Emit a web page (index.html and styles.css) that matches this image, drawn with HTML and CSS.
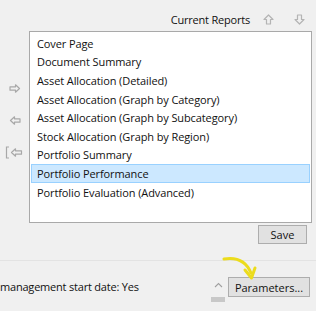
FILE: index.html
```html
<!DOCTYPE html>
<html>
<head>
<meta charset="utf-8">
<link rel="stylesheet" href="styles.css">
</head>
<body>
<div class="page">
  <div class="top">
    <span class="title">Current Reports</span>
    <span class="arr up"><svg width="11" height="11" viewBox="0 0 11 11"><path d="M5.5 1 L10 5.5 L7.5 5.5 L7.5 10 L3.5 10 L3.5 5.5 L1 5.5 Z" fill="none" stroke="#b4b4b4" stroke-width="1.2" stroke-linejoin="round"/></svg></span>
    <span class="arr down"><svg width="11" height="11" viewBox="0 0 11 11"><path d="M5.5 10 L10 5.5 L7.5 5.5 L7.5 1 L3.5 1 L3.5 5.5 L1 5.5 Z" fill="none" stroke="#b4b4b4" stroke-width="1.2" stroke-linejoin="round"/></svg></span>
  </div>
  <div class="main">
    <div class="gutter">
      <span class="gicon"><svg width="12" height="9" viewBox="0 0 12 9"><path d="M1 2.8 L6.5 2.8 L6.5 0.8 L10.5 4.5 L6.5 8.2 L6.5 6.2 L1 6.2 Z" fill="none" stroke="#a8a8a8" stroke-width="1.2" stroke-linejoin="round"/></svg></span>
      <span class="gicon"><svg width="12" height="9" viewBox="0 0 12 9"><path d="M11 2.8 L5.5 2.8 L5.5 0.8 L1.5 4.5 L5.5 8.2 L5.5 6.2 L11 6.2 Z" fill="none" stroke="#a8a8a8" stroke-width="1.2" stroke-linejoin="round"/></svg></span>
      <span class="gicon wide"><svg width="18" height="13" viewBox="0 0 18 13"><path d="M4 1 L1.5 1 L1.5 12 L4 12" fill="none" stroke="#a8a8a8" stroke-width="1.2"/><path d="M16.5 4.8 L10.5 4.8 L10.5 2.8 L6.5 6.5 L10.5 10.2 L10.5 8.2 L16.5 8.2 Z" fill="none" stroke="#a8a8a8" stroke-width="1.2" stroke-linejoin="round"/></svg></span>
    </div>
    <div class="listcol">
      <div class="listbox">
        <div class="item">Cover Page</div>
        <div class="item">Document Summary</div>
        <div class="item">Asset Allocation (Detailed)</div>
        <div class="item">Asset Allocation (Graph by Category)</div>
        <div class="item">Asset Allocation (Graph by Subcategory)</div>
        <div class="item">Stock Allocation (Graph by Region)</div>
        <div class="item">Portfolio Summary</div>
        <div class="item selected">Portfolio Performance</div>
        <div class="item">Portfolio Evaluation (Advanced)</div>
      </div>
      <div class="saverow"><button class="btn save">Save</button></div>
    </div>
  </div>
  <div class="bottom">
    <span class="info">management start date: Yes</span>
    <div class="scroller">
      <span class="caret"><svg width="9" height="6" viewBox="0 0 9 6"><path d="M1 5 L4.5 1.5 L8 5" fill="none" stroke="#a0a0a0" stroke-width="1.1"/></svg></span>
      <span class="thumb"></span>
    </div>
    <button class="btn params">Parameters...</button>
    <svg class="annot" width="40" height="26" viewBox="0 0 40 26"><path d="M2 3 C14 1 24 5 29 17" fill="none" stroke="#ecdc1c" stroke-width="3" stroke-linecap="round"/><path d="M23 14 L29.5 22 L33 12" fill="none" stroke="#ecdc1c" stroke-width="3" stroke-linecap="round" stroke-linejoin="round"/></svg>
  </div>
</div>
</body>
</html>
```
FILE: styles.css
```css
* { box-sizing: border-box; }
html, body { margin: 0; padding: 0; }
body {
  background: #f0f0f0;
  font-family: "Open Sans", "Noto Sans", sans-serif;
  font-size: 11px;
  color: #111;
}
.page {
  width: 316px;
  height: 311px;
  overflow: hidden;
  position: relative;
}
.top {
  height: 31px;
  display: flex;
  align-items: center;
  justify-content: flex-end;
  padding: 8px 11px 0 0;
}
.title {
  font-size: 11px;
  letter-spacing: -0.2px;
  margin-right: 13px;
  color: #111;
}
.arr { display: flex; width: 11px; height: 11px; }
.arr.up { margin-right: 20px; }
.main { display: flex; }
.gutter {
  width: 29px;
  display: flex;
  flex-direction: column;
  align-items: center;
  padding-top: 53px;
  gap: 23px;
}
.gicon { display: flex; height: 9px; width: 12px; justify-content: center; align-items: center; }
.gicon.wide { width: 18px; height: 13px; margin-left: -2px; margin-top: -2px; }
.listcol { width: 283px; display: flex; flex-direction: column; }
.listbox {
  height: 192px;
  background: #fff;
  border: 1px solid #a9a9a9;
  padding: 2px 1px;
}
.item {
  height: 18.6px;
  padding-left: 5px;
  font-size: 11px;
  letter-spacing: -0.1px;
  white-space: nowrap;
  border: 1px solid transparent;
  display: flex;
  align-items: center;
}
.item.selected {
  background: #cce8ff;
  border-color: #99d1ff;
}
.saverow {
  display: flex;
  justify-content: flex-end;
  padding: 2px 5px 0 0;
}
.btn {
  font-family: "Open Sans", "Noto Sans", sans-serif;
  font-size: 11px;
  color: #111;
  background: #e1e1e1;
  border: 1px solid #adadad;
  padding: 0;
  margin: 0;
  display: flex;
  align-items: center;
  justify-content: center;
}
.save { width: 49px; height: 19px; }
.bottom {
  position: absolute;
  left: 0;
  top: 260px;
  width: 316px;
  height: 51px;
  border-top: 1px solid #e3e3e3;
  display: flex;
  align-items: flex-start;
  padding-top: 16px;
}
.info {
  font-size: 11px;
  letter-spacing: -0.2px;
  line-height: 20px;
  flex: 1;
}
.scroller {
  width: 16px;
  display: flex;
  flex-direction: column;
  align-items: center;
  margin-right: 2px;
  padding-top: 5px;
}
.caret { display: flex; height: 6px; }
.thumb { display: block; width: 14px; height: 5px; background: #c8c8c8; margin-top: 9px; }
.params { width: 82px; height: 20px; margin-right: 6px; }
.annot { position: absolute; left: 222px; top: -5px; }
```
